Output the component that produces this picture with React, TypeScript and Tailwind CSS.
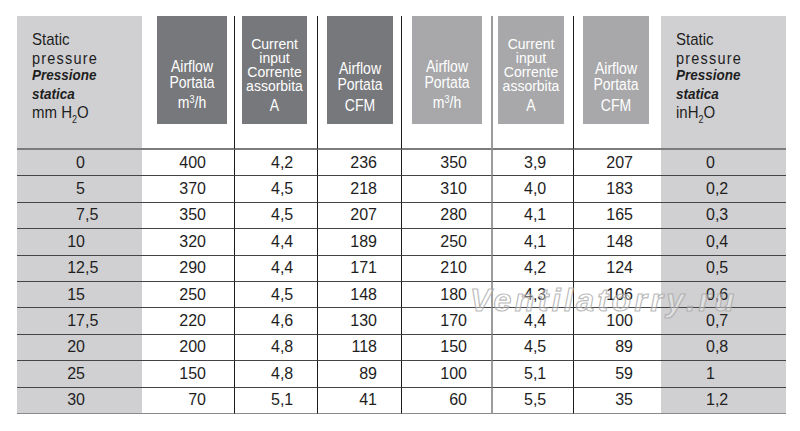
import React from "react";

type Row = [string, string, string, string, string, string, string, string];

const rows: Row[] = [
  ["0", "400", "4,2", "236", "350", "3,9", "207", "0"],
  ["5", "370", "4,5", "218", "310", "4,0", "183", "0,2"],
  ["7,5", "350", "4,5", "207", "280", "4,1", "165", "0,3"],
  ["10", "320", "4,4", "189", "250", "4,1", "148", "0,4"],
  ["12,5", "290", "4,4", "171", "210", "4,2", "124", "0,5"],
  ["15", "250", "4,5", "148", "180", "4,3", "106", "0,6"],
  ["17,5", "220", "4,6", "130", "170", "4,4", "100", "0,7"],
  ["20", "200", "4,8", "118", "150", "4,5", "89", "0,8"],
  ["25", "150", "4,8", "89", "100", "5,1", "59", "1"],
  ["30", "70", "5,1", "41", "60", "5,5", "35", "1,2"],
];

const colCell = [
  "bg-[#d0d0d2]",
  "",
  "border-l border-[#1c1c1c]",
  "border-l border-[#1c1c1c]",
  "border-l border-[#1c1c1c]",
  "border-l-2 border-[#9c9c9c]",
  "border-l border-[#1c1c1c]",
  "bg-[#d0d0d2]",
];

const dataAlign = [
  "",
  "justify-end pr-[28px]",
  "justify-start pl-[36px]",
  "justify-end pr-[24px]",
  "justify-end pr-[24px]",
  "justify-start pl-[31px]",
  "justify-end pr-[28px]",
  "justify-start pl-[45px]",
];

function Sup3() {
  return <span className="relative -top-[5px] text-[9px]">3</span>;
}

function Sub2() {
  return <span className="relative top-[4px] text-[9px]">2</span>;
}

function PressureHeader({ unit }: { unit: React.ReactNode }) {
  return (
    <div className="flex flex-col items-start pt-[14px] pl-[15px] text-[#1e1e1e] leading-[18.5px]">
      <span className="origin-left scale-y-[1.12] text-[15px]">Static</span>
      <span className="origin-left scale-y-[1.12] text-[14.5px] tracking-[1.2px]">pressure</span>
      <span className="origin-left scale-y-[1.12] text-[13.5px] font-bold italic">Pressione</span>
      <span className="origin-left scale-y-[1.12] text-[13.5px] font-bold italic">statica</span>
      <span className="origin-left scale-y-[1.12] text-[15px]">{unit}</span>
    </div>
  );
}

function AirflowBox({ dark, unit, ml }: { dark: boolean; unit: React.ReactNode; ml: string }) {
  return (
    <div
      className={`${dark ? "bg-[#77787b]" : "bg-[#a8a8aa]"} ${ml} flex h-[108px] flex-col items-center justify-end pb-[10px] text-center text-[14px] text-white`}
    >
      <span className="scale-y-[1.12] leading-[16.6px]">Airflow</span>
      <span className="scale-y-[1.12] leading-[16.6px]">Portata</span>
      <span className="mt-[4px] scale-y-[1.12] leading-[17px]">{unit}</span>
    </div>
  );
}

function CurrentBox({ dark, ml }: { dark: boolean; ml: string }) {
  return (
    <div
      className={`${dark ? "bg-[#77787b]" : "bg-[#a8a8aa]"} ${ml} flex h-[108px] flex-col items-center justify-end pb-[10px] text-center text-[14px] text-white`}
    >
      <span className="scale-y-[1.1] leading-[14px]">Current</span>
      <span className="scale-y-[1.1] leading-[14px]">input</span>
      <span className="scale-y-[1.1] leading-[14px]">Corrente</span>
      <span className="scale-y-[1.1] leading-[14px]">assorbita</span>
      <span className="mt-[5px] scale-y-[1.12] leading-[17px]">A</span>
    </div>
  );
}

function FirstCol({ v }: { v: string }) {
  const idx = v.indexOf(",");
  const int = idx >= 0 ? v.slice(0, idx) : v;
  const frac = idx >= 0 ? v.slice(idx) : "";
  return (
    <span className="flex">
      <span className="inline-block w-[68px] text-right">{int}</span>
      <span>{frac}</span>
    </span>
  );
}

export default function App() {
  return (
    <div
      className="relative h-[431px] w-[800px] overflow-hidden bg-white"
      style={{ fontFamily: '"Liberation Sans", Arial, sans-serif' }}
    >
      <div className="ml-[17px] mt-[16px] grid w-[769px] grid-cols-[125px_92px_83px_84px_90px_82px_88px_125px]">
        {/* header */}
        <div className={`${colCell[0]} h-[134px] border-b-2 border-b-[#7c7c7c]`}>
          <PressureHeader
            unit={
              <>
                mm H<Sub2 />O
              </>
            }
          />
        </div>
        <div className={`${colCell[1]} h-[134px] border-b-2 border-b-[#7c7c7c]`}>
          <div className="w-[85px]">
            <AirflowBox
              dark
              ml="ml-[15px]"
              unit={
                <>
                  m<Sup3 />/h
                </>
              }
            />
          </div>
        </div>
        <div className={`${colCell[2]} h-[134px] border-b-2 border-b-[#7c7c7c]`}>
          <div className="w-[72px]">
            <CurrentBox dark ml="ml-[7px]" />
          </div>
        </div>
        <div className={`${colCell[3]} h-[134px] border-b-2 border-b-[#7c7c7c]`}>
          <div className="w-[75px]">
            <AirflowBox dark ml="ml-[9px]" unit="CFM" />
          </div>
        </div>
        <div className={`${colCell[4]} h-[134px] border-b-2 border-b-[#7c7c7c]`}>
          <div className="w-[80px]">
            <AirflowBox
              dark={false}
              ml="ml-[10px]"
              unit={
                <>
                  m<Sup3 />/h
                </>
              }
            />
          </div>
        </div>
        <div className={`${colCell[5]} h-[134px] border-b-2 border-b-[#7c7c7c]`}>
          <div className="w-[71px]">
            <CurrentBox dark={false} ml="ml-[5px]" />
          </div>
        </div>
        <div className={`${colCell[6]} h-[134px] border-b-2 border-b-[#7c7c7c]`}>
          <div className="w-[75px]">
            <AirflowBox dark={false} ml="ml-[9px]" unit="CFM" />
          </div>
        </div>
        <div className={`${colCell[7]} h-[134px] border-b-2 border-b-[#7c7c7c]`}>
          <PressureHeader
            unit={
              <>
                inH<Sub2 />O
              </>
            }
          />
        </div>

        {/* data rows */}
        {rows.map((r, ri) =>
          r.map((v, ci) => (
            <div
              key={`${ri}-${ci}`}
              className={`${colCell[ci]} ${dataAlign[ci]} ${
                ri === rows.length - 1 ? "border-b-[#8a8a8a]" : "border-b-[#454545]"
              } flex h-[26.4px] items-center border-b text-[16px] text-[#1e1e1e]`}
            >
              {ci === 0 ? <FirstCol v={v} /> : <span>{v}</span>}
            </div>
          ))
        )}
      </div>

      {/* watermark */}
      <div
        className="pointer-events-none absolute left-[470px] top-[284px] text-[32px] font-bold italic leading-[32px] tracking-[3.4px] text-[rgba(255,255,255,0.35)]"
        style={{ WebkitTextStroke: "1.2px rgba(165,165,165,0.75)" }}
      >
        Ventilatorry.ru
      </div>
    </div>
  );
}
